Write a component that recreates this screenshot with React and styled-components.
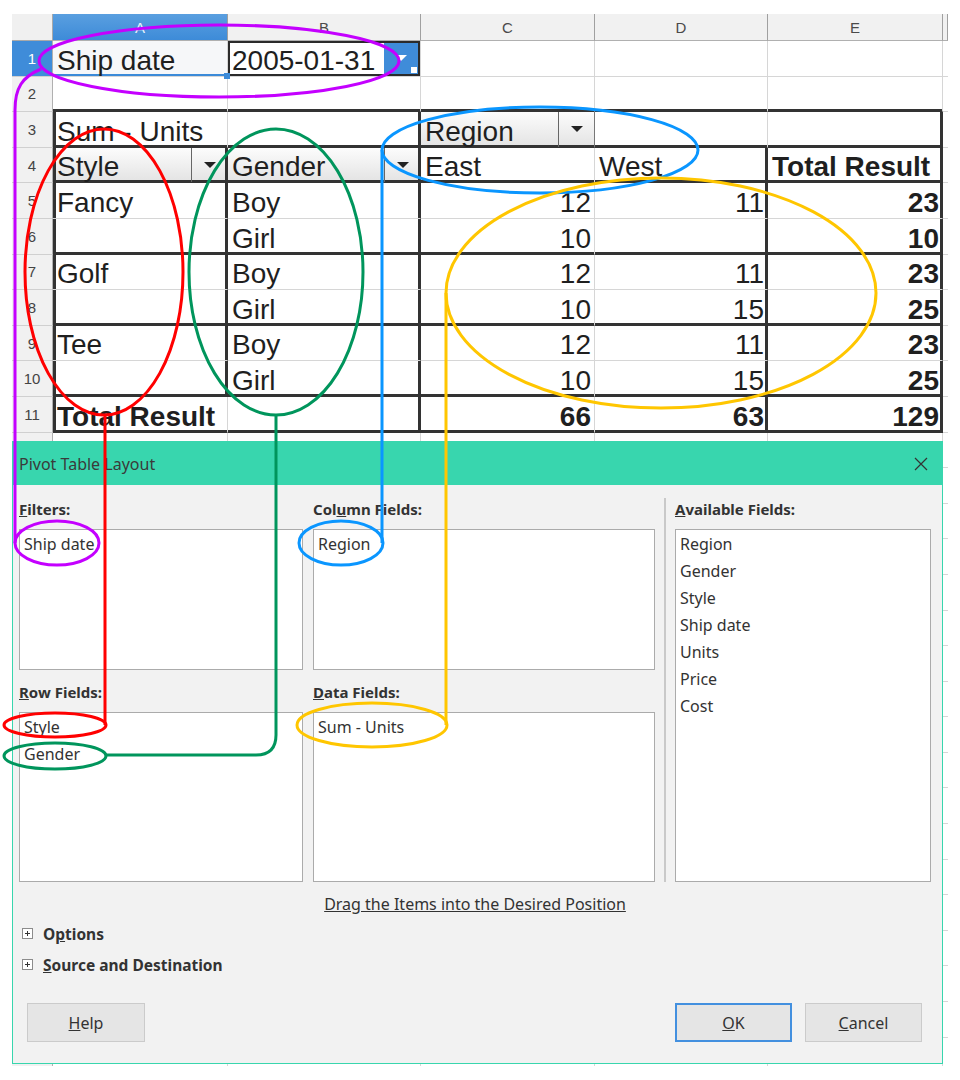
import React from "react";
import styled, { createGlobalStyle } from "styled-components";

const GlobalStyle = createGlobalStyle`
  html, body {
    margin: 0;
    padding: 0;
    background: #fff;
  }
  body {
    font-family: "Liberation Sans", Arial, sans-serif;
  }
`;

const Page = styled.div`
  position: relative;
  width: 960px;
  height: 1080px;
  box-sizing: border-box;
  padding: 14px 0 0 12px;
  overflow: hidden;
  background: #fff;
`;

/* ---------- spreadsheet ---------- */

const Grid = styled.div`
  display: grid;
  grid-template-columns: 41px 175px 193px 174px 173px 175px 5px;
  grid-template-rows: 27px;
  grid-auto-rows: 35.6px;
  width: 936px;
  height: 1052px;
  overflow: hidden;
`;

const Corner = styled.div`
  background: #f0f0f0;
  border-right: 1px solid #a9a9a9;
  border-bottom: 1px solid #a9a9a9;
`;

const ColHead = styled.div`
  box-sizing: border-box;
  display: flex;
  align-items: center;
  justify-content: center;
  background: ${(p) => (p.$active ? "linear-gradient(#5a9fe0, #3d8bd8)" : "#f1f1f1")};
  color: ${(p) => (p.$active ? "#e9f2fb" : "#4a4a4a")};
  border-right: 1px solid #a0a0a0;
  border-bottom: 1px solid #b0b0b0;
  font-size: 15px;
`;

const RowHead = styled.div`
  box-sizing: border-box;
  display: flex;
  align-items: center;
  justify-content: center;
  background: ${(p) => (p.$active ? "#3f8cd9" : "#f1f1f1")};
  color: ${(p) => (p.$active ? "#fff" : "#444")};
  border-right: 1px solid #b0b0b0;
  border-bottom: 1px solid #d0d0d0;
  font-size: 15px;
`;

const edgeShadow = (p) => {
  const s = [];
  if (p.$l) s.push("inset 3px 0 0 #333");
  if (p.$r) s.push("inset -2px 0 0 #333");
  if (p.$b) s.push("inset 0 -2px 0 #333");
  if (p.$sel) s.push("inset 0 -2px 0 #3b8ad8");
  if (p.$cursor) s.push("inset 0 0 0 2px #2b2b2b");
  return s.length ? s.join(", ") : "none";
};

const Cell = styled.div`
  position: relative;
  box-sizing: border-box;
  display: flex;
  align-items: flex-end;
  justify-content: ${(p) => (p.$num ? "flex-end" : "flex-start")};
  min-width: 0;
  padding: ${(p) => (p.$btn || p.$cursor ? "0 0 0 4px" : "0 3px 0 4px")};
  background: ${(p) =>
    p.$btn ? "linear-gradient(#fcfcfc, #e3e3e3)" : p.$sel ? "#f6f7f9" : "#fff"};
  border-right: 1px solid
    ${(p) => (p.$r ? "#333" : p.$btn ? "#777" : "#d6d6d6")};
  border-bottom: 1px solid ${(p) => (p.$b ? "#333" : "#d6d6d6")};
  box-shadow: ${edgeShadow};
  font-size: 28px;
  line-height: 30px;
  font-weight: ${(p) => (p.$bold ? 700 : 400)};
  color: #1f1f1f;
  white-space: nowrap;
`;

const BtnLabel = styled.span`
  flex: 1;
`;

const ArrowBox = styled.span`
  align-self: stretch;
  width: 35px;
  display: flex;
  align-items: center;
  justify-content: center;
  border-left: 1px solid #666;
`;

const Tri = styled.span`
  width: 0;
  height: 0;
  border-left: 6px solid transparent;
  border-right: 6px solid transparent;
  border-top: 6px solid ${(p) => p.$color || "#222"};
`;

const FilterBtn = styled.span`
  position: relative;
  align-self: stretch;
  width: 34px;
  margin: 2px 2px 2px 0;
  background: #3f8cd9;
  display: flex;
  align-items: center;
  justify-content: center;
`;

const FillHandle = styled.span`
  position: absolute;
  right: ${(p) => p.$right}px;
  bottom: ${(p) => p.$bottom}px;
  width: 6px;
  height: 6px;
  background: ${(p) => p.$color};
  z-index: 2;
`;

const ROWS = [
  [{ t: "Ship date", sel: true }, { t: "2005-01-31", cursor: true }],
  [],
  [{ t: "Sum - Units" }, {}, { t: "Region", btn: true }],
  [
    { t: "Style", btn: true },
    { t: "Gender", btn: true },
    { t: "East" },
    { t: "West" },
    { t: "Total Result", bold: true },
  ],
  [{ t: "Fancy" }, { t: "Boy" }, { n: 12 }, { n: 11 }, { n: 23, bold: true }],
  [{}, { t: "Girl" }, { n: 10 }, {}, { n: 10, bold: true }],
  [{ t: "Golf" }, { t: "Boy" }, { n: 12 }, { n: 11 }, { n: 23, bold: true }],
  [{}, { t: "Girl" }, { n: 10 }, { n: 15 }, { n: 25, bold: true }],
  [{ t: "Tee" }, { t: "Boy" }, { n: 12 }, { n: 11 }, { n: 23, bold: true }],
  [{}, { t: "Girl" }, { n: 10 }, { n: 15 }, { n: 25, bold: true }],
  [
    { t: "Total Result", bold: true },
    {},
    { n: 66, bold: true },
    { n: 63, bold: true },
    { n: 129, bold: true },
  ],
];

// thick pivot-table rules for row r (1-based), column c (0 = A)
const edges = (r, c) => {
  const e = {};
  if (c > 4) return e;
  if ([2, 3, 4, 6, 8, 10, 11].includes(r)) e.b = true;
  if (r >= 3 && r <= 11) {
    if (c === 0) e.l = true;
    if (c === 1 || c === 4) e.r = true;
    if (c === 0 && r >= 4 && r <= 10) e.r = true;
    if (c === 3 && r >= 4) e.r = true;
  }
  return e;
};

function Sheet() {
  const cells = [<Corner key="corner" />];
  ["A", "B", "C", "D", "E", ""].forEach((l, i) =>
    cells.push(
      <ColHead key={"h" + i} $active={i === 0}>
        {l}
      </ColHead>
    )
  );
  for (let r = 1; r <= 29; r++) {
    cells.push(
      <RowHead key={"r" + r} $active={r === 1}>
        {r}
      </RowHead>
    );
    const row = ROWS[r - 1] || [];
    for (let c = 0; c < 6; c++) {
      const d = row[c] || {};
      const e = edges(r, c);
      const num = d.n !== undefined;
      cells.push(
        <Cell
          key={r + "-" + c}
          $l={e.l}
          $r={e.r}
          $b={e.b}
          $num={num}
          $bold={d.bold}
          $btn={d.btn}
          $sel={d.sel}
          $cursor={d.cursor}
        >
          {d.btn ? (
            <>
              <BtnLabel>{d.t}</BtnLabel>
              <ArrowBox>
                <Tri />
              </ArrowBox>
            </>
          ) : d.cursor ? (
            <>
              <BtnLabel>{d.t}</BtnLabel>
              <FilterBtn>
                <Tri $color="#fff" />
                <FillHandle $right={1} $bottom={1} $color="#fff" />
              </FilterBtn>
            </>
          ) : num ? (
            d.n
          ) : (
            d.t
          )}
          {d.sel && <FillHandle $right={-3} $bottom={-3} $color="#3b8ad8" />}
        </Cell>
      );
    }
  }
  return <Grid>{cells}</Grid>;
}

/* ---------- dialog ---------- */

const Dialog = styled.div`
  position: absolute;
  left: 12px;
  top: 441px;
  width: 931px;
  height: 623px;
  box-sizing: border-box;
  border: 1px solid #38d6ae;
  background: #f2f2f2;
  display: flex;
  flex-direction: column;
  font-family: "Noto Sans", "Open Sans", sans-serif;
  color: #333;
  z-index: 5;
`;

const TitleBar = styled.div`
  height: 43px;
  flex: none;
  background: #38d6ae;
  display: flex;
  align-items: center;
  justify-content: space-between;
  padding: 0 14px 0 6px;
  font-size: 16px;
  color: #3a3a3a;
`;

const Body = styled.div`
  flex: 1;
  display: flex;
  flex-direction: column;
  padding: 12px 11px 21px 6px;
`;

const FieldsRow = styled.div`
  display: flex;
`;

const FieldsGrid = styled.div`
  display: grid;
  grid-template-columns: 284px 342px;
  column-gap: 10px;
  row-gap: 10px;
`;

const Group = styled.div`
  display: flex;
  flex-direction: column;
`;

const Label = styled.div`
  font-size: 15px;
  font-weight: 700;
  line-height: 24px;
  padding-bottom: 8px;
  color: #333;
  white-space: nowrap;
`;

const ListBox = styled.div`
  box-sizing: border-box;
  height: ${(p) => p.$h}px;
  background: #fff;
  border: 1px solid #ababab;
  padding: 1px 4px;
`;

const Item = styled.div`
  font-size: 16px;
  line-height: 27px;
  color: #333;
  white-space: nowrap;
`;

const Separator = styled.div`
  width: 20px;
  display: flex;
  justify-content: center;
  padding-top: 1px;

  &::before {
    content: "";
    width: 2px;
    background: #c9c9c9;
  }
`;

const DragHint = styled.div`
  margin-top: 10px;
  line-height: 24px;
  font-size: 16px;
  text-align: center;
  text-decoration: underline;
  color: #333;
`;

const Expanders = styled.div`
  margin-top: 2px;
  display: flex;
  flex-direction: column;
`;

const Expander = styled.div`
  height: 31px;
  display: flex;
  align-items: center;
  gap: 10px;
  padding-left: 3px;
  font-size: 15.5px;
  font-weight: 700;
`;

const ButtonRow = styled.div`
  margin-top: auto;
  display: flex;
  align-items: center;
  padding: 0 9px 0 8px;
`;

const Spacer = styled.div`
  flex: 1;
`;

const Button = styled.div`
  box-sizing: border-box;
  width: ${(p) => p.$w}px;
  height: 39px;
  margin-left: ${(p) => p.$ml || 0}px;
  display: flex;
  align-items: center;
  justify-content: center;
  background: #e5e5e5;
  border: ${(p) => (p.$primary ? "2px solid #4390df" : "1px solid #cbcbcb")};
  font-size: 16px;
  color: #333;
`;

const CloseIcon = () => (
  <svg width="14" height="14" viewBox="0 0 14 14">
    <path d="M1 1L13 13M13 1L1 13" stroke="#333" strokeWidth="1.2" fill="none" />
  </svg>
);

const PlusBox = () => (
  <svg width="11" height="11" viewBox="0 0 11 11">
    <rect x="0.5" y="0.5" width="10" height="10" fill="#fff" stroke="#8c8c8c" />
    <path d="M3 5.5H8M5.5 3V8" stroke="#333" strokeWidth="1" />
  </svg>
);

function PivotDialog() {
  return (
    <Dialog>
      <TitleBar>
        <span>Pivot Table Layout</span>
        <CloseIcon />
      </TitleBar>
      <Body>
        <FieldsRow>
          <FieldsGrid>
            <Group>
              <Label>
                <u>F</u>ilters:
              </Label>
              <ListBox $h={141}>
                <Item>Ship date</Item>
              </ListBox>
            </Group>
            <Group>
              <Label>
                Col<u>u</u>mn Fields:
              </Label>
              <ListBox $h={141}>
                <Item>Region</Item>
              </ListBox>
            </Group>
            <Group>
              <Label>
                <u>R</u>ow Fields:
              </Label>
              <ListBox $h={170}>
                <Item>Style</Item>
                <Item>Gender</Item>
              </ListBox>
            </Group>
            <Group>
              <Label>
                <u>D</u>ata Fields:
              </Label>
              <ListBox $h={170}>
                <Item>Sum - Units</Item>
              </ListBox>
            </Group>
          </FieldsGrid>
          <Separator />
          <Group>
            <Label>
              <u>A</u>vailable Fields:
            </Label>
            <ListBox $h={353} style={{ width: 256 }}>
              {["Region", "Gender", "Style", "Ship date", "Units", "Price", "Cost"].map(
                (f) => (
                  <Item key={f}>{f}</Item>
                )
              )}
            </ListBox>
          </Group>
        </FieldsRow>
        <DragHint>Drag the Items into the Desired Position</DragHint>
        <Expanders>
          <Expander>
            <PlusBox />
            <span>
              O<u>p</u>tions
            </span>
          </Expander>
          <Expander>
            <PlusBox />
            <span>
              <u>S</u>ource and Destination
            </span>
          </Expander>
        </Expanders>
        <ButtonRow>
          <Button $w={118}>
            <span>
              <u>H</u>elp
            </span>
          </Button>
          <Spacer />
          <Button $w={117} $primary>
            <span>
              <u>O</u>K
            </span>
          </Button>
          <Button $w={117} $ml={13}>
            <span>
              <u>C</u>ancel
            </span>
          </Button>
        </ButtonRow>
      </Body>
    </Dialog>
  );
}

/* ---------- annotation overlay ---------- */

const Overlay = styled.svg`
  position: absolute;
  left: 0;
  top: 0;
  width: 960px;
  height: 1080px;
  pointer-events: none;
  z-index: 10;
`;

const MARKS = [
  {
    color: "#c400ff",
    big: { cx: 219, cy: 61, rx: 180, ry: 36 },
    small: { cx: 57, cy: 543, rx: 42, ry: 22 },
    path: "M41 69 C22 77 15 88 15 110 L15 543",
  },
  {
    color: "#ff0000",
    big: { cx: 104, cy: 272, rx: 79, ry: 143 },
    small: { cx: 55, cy: 725, rx: 51, ry: 12 },
    path: "M105 415 L105 725",
  },
  {
    color: "#00955c",
    big: { cx: 276, cy: 272, rx: 87, ry: 143 },
    small: { cx: 55, cy: 756, rx: 51, ry: 13 },
    path: "M276 415 L276 735 Q276 755 256 755 L106 755",
  },
  {
    color: "#0a96ff",
    big: { cx: 540, cy: 150, rx: 158, ry: 43 },
    small: { cx: 341, cy: 543, rx: 42, ry: 22 },
    path: "M382 150 L382 543",
  },
  {
    color: "#ffc600",
    big: { cx: 661, cy: 293, rx: 215, ry: 115 },
    small: { cx: 372, cy: 725, rx: 75, ry: 22 },
    path: "M446 293 L446 725",
  },
];

function Annotations() {
  return (
    <Overlay viewBox="0 0 960 1080">
      {MARKS.map((m) => (
        <g key={m.color} fill="none" stroke={m.color} strokeWidth="3">
          <ellipse {...m.big} />
          <ellipse {...m.small} />
          <path d={m.path} />
        </g>
      ))}
    </Overlay>
  );
}

export default function App() {
  return (
    <Page>
      <GlobalStyle />
      <Sheet />
      <PivotDialog />
      <Annotations />
    </Page>
  );
}
